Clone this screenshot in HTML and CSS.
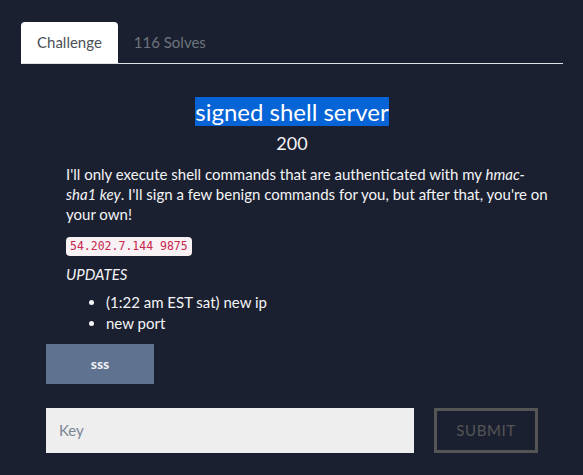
FILE: index.html
```html
<!DOCTYPE html>
<html>
<head>
<meta charset="utf-8">
<link rel="stylesheet" href="styles.css">
</head>
<body>
<div class="page">
  <div class="tabs">
    <div class="tab active">Challenge</div>
    <div class="tab">116 Solves</div>
  </div>
  <div class="content">
    <h3 class="title"><span class="sel">signed shell server</span></h3>
    <div class="value">200</div>
    <div class="desc">
      <p class="text">I'll only execute shell commands that are authenticated with my <em>hmac-sha1 key</em>. I'll sign a few benign commands for you, but after that, you're on your own!</p>
      <p class="codeline"><code>54.202.7.144 9875</code></p>
      <p class="updates"><em>UPDATES</em></p>
      <ul class="list">
        <li>(1:22 am EST sat) new ip</li>
        <li>new port</li>
      </ul>
    </div>
    <div class="file"><span class="filebtn">sss</span></div>
    <form class="submitrow">
      <input class="key" type="text" placeholder="Key">
      <button class="submit" type="button">SUBMIT</button>
    </form>
  </div>
</div>
</body>
</html>
```

FILE: styles.css
```css
html, body {
  margin: 0;
  padding: 0;
  background: #1b2030;
  font-family: Lato, "Noto Sans", sans-serif;
  color: #f3f4f6;
}

.page {
  padding: 22px 20px 0 21px;
}

.tabs {
  display: flex;
  border-bottom: 1px solid #dee2e6;
  height: 41px;
}

.tab {
  padding: 0 16px;
  height: 41px;
  line-height: 41px;
  font-size: 15px;
  color: #6c757d;
  border-radius: 4px 4px 0 0;
}

.tab.active {
  background: #fff;
  color: #495057;
}

.content {
  display: flex;
  flex-direction: column;
  padding: 0 0 0 25px;
}

.title {
  margin: 33px 0 0 -25px;
  text-align: center;
  font-size: 24px;
  font-weight: 400;
  line-height: normal;
}

.sel {
  background: #0664d6;
  color: #fff;
}

.value {
  margin: 7px 0 0 -25px;
  text-align: center;
  font-size: 18px;
  line-height: 1.2;
}

.desc {
  padding-left: 20px;
  font-size: 15px;
  line-height: 20px;
  width: 485px;
}

.text {
  margin: 9px 0 0;
}

.codeline {
  margin: 11px 0 0;
  line-height: 19px;
}

code {
  display: inline-block;
  font-family: "DejaVu Sans Mono", monospace;
  font-size: 11.5px;
  line-height: 19px;
  padding: 0 4px;
  background: #f9f2f4;
  color: #c7254e;
  border-radius: 4px;
}

.updates {
  margin: 8px 0 0;
}

.list {
  margin: 8px 0 0;
  padding-left: 40px;
  line-height: 21px;
}

.file {
  margin-top: 10px;
}

.filebtn {
  display: inline-block;
  width: 108px;
  height: 40px;
  line-height: 40px;
  text-align: center;
  background: #5f7391;
  color: #f4f4f4;
  font-weight: 700;
  font-size: 14px;
}

.submitrow {
  display: flex;
  gap: 20px;
  margin: 24px 0 0;
}

.key {
  width: 368px;
  height: 45px;
  box-sizing: border-box;
  border: none;
  background: #eeeeee;
  padding: 0 13px;
  font-family: Lato, sans-serif;
  font-size: 15px;
  color: #333;
  outline: none;
}

.key::placeholder {
  color: #7b8594;
}

.submit {
  width: 104px;
  height: 45px;
  box-sizing: border-box;
  border: 3px solid #555;
  background: transparent;
  color: #555;
  font-family: Lato, sans-serif;
  font-size: 15px;
  letter-spacing: 0.6px;
  padding: 0;
}
```
